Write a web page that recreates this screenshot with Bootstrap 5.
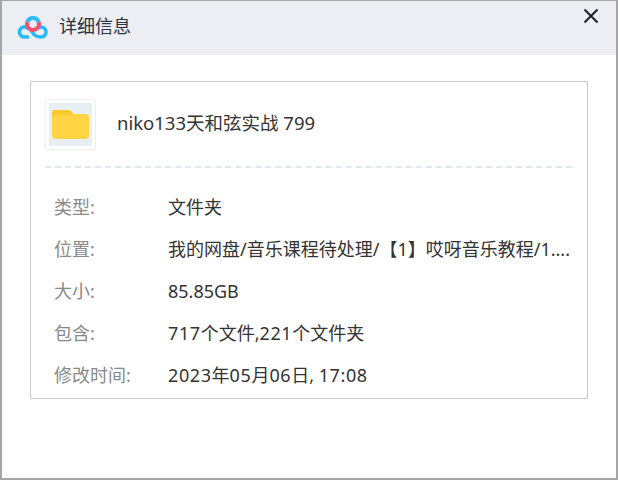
<!DOCTYPE html>
<html lang="zh"><head><meta charset="utf-8"><title>详细信息</title>
<link href="https://cdn.jsdelivr.net/npm/bootstrap@5.3.0/dist/css/bootstrap.min.css" rel="stylesheet">
<style>
html,body{height:480px;overflow:hidden;background:#fff}
body{font-family:"Noto Sans","Noto Sans CJK SC",sans-serif}
.win{width:618px;height:480px;border:solid #a6a6a6;border-width:1px 2px 2px 2px}
.head{height:54px;background:#eceef4;padding-left:15px;gap:10px;color:#2c3240;font-size:18px}
.ttl{margin-bottom:4px}
.closer{margin-left:auto;margin-right:17px;margin-bottom:24px;line-height:0}
.box{margin:26px 28px 0 28px;height:318px;border:1px solid #c8c8c8;border-radius:2px;padding:17px 15px 0 14px}
.thumb{width:51px;height:51px;border:1px solid #eeeeee;border-radius:2px;padding:3px}
.thumb-in{width:100%;height:100%;background:#e7eff3}
.fname{font-size:18.500px;color:#333;margin-left:21px;margin-bottom:3px}
.sep{border-top:2px dashed #e0e7ee;margin-top:16px;margin-bottom:18px;height:0}
.info{font-size:18px;height:42px;color:#333}
.lab{width:123px;padding-left:9px;color:#8a8a8a;flex:none}
.val{white-space:nowrap}
.dg{letter-spacing:.6px}
</style></head><body>
<div class="win d-flex flex-column">
<div class="head d-flex align-items-center">
<svg width="32" height="26" viewBox="0 0 32 26"><path d="M12 22H7.500A5 5 0 1 1 11.500 14" fill="none" stroke="#25b8fb" stroke-width="3.500"/><path d="M14 15.500L17.500 20Q20 22 24 22A5 5 0 1 0 21.500 12.700" fill="none" stroke="#25b8fb" stroke-width="3.500"/><path d="M10.340 7A6 6 0 0 1 21.660 7" fill="none" stroke="#2fbcf8" stroke-width="4"/><path d="M10.340 7A6 6 0 1 0 21.660 7" fill="none" stroke="#f4536e" stroke-width="4"/></svg>
<span class="ttl">详细信息</span>
<span class="closer"><svg width="16" height="16" viewBox="0 0 16 16"><path d="M1.500 1.500L14.500 14.500M14.500 1.500L1.500 14.500" stroke="#17202c" stroke-width="2"/></svg></span>
</div>
<div class="box">
<div class="d-flex align-items-center">
<div class="thumb"><div class="thumb-in d-flex align-items-center justify-content-center"><svg width="37" height="29" viewBox="0 0 37 29"><path d="M3 0H16Q20 0 21 4H34Q37 4 37 7V25Q37 29 33 29H4Q0 29 0 25V3Q0 0 3 0Z" fill="#ffd544"/><path d="M0 5V3Q0 0 3 0H16Q20 0 21 5Z" fill="#ffc62e"/></svg></div></div>
<div class="fname">niko133天和弦实战 799</div>
</div>
<div class="sep"></div>
<div class="info d-flex align-items-center"><div class="lab">类型:</div><div class="val">文件夹</div></div>
<div class="info d-flex align-items-center"><div class="lab">位置:</div><div class="val">我的网盘/音乐课程待处理/【1】哎呀音乐教程/1....</div></div>
<div class="info d-flex align-items-center"><div class="lab">大小:</div><div class="val">85.85GB</div></div>
<div class="info d-flex align-items-center"><div class="lab">包含:</div><div class="val"><span class="dg">717</span>个文件,<span class="dg">221</span>个文件夹</div></div>
<div class="info d-flex align-items-center"><div class="lab">修改时间:</div><div class="val"><span class="dg">2023</span>年<span class="dg">05</span>月<span class="dg">06</span>日, <span class="dg">17:08</span></div></div>
</div>
</div>
</body></html>
